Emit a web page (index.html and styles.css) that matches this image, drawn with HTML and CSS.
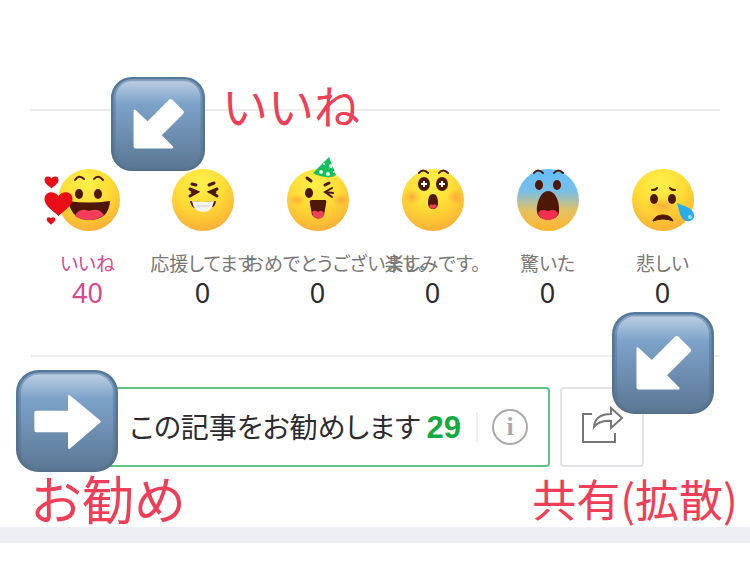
FILE: index.html
```html
<!DOCTYPE html>
<html lang="ja">
<head>
    <meta charset="UTF-8">
    <meta name="viewport" content="width=device-width, initial-scale=1.0">
    <title>いいね・お勧め・共有</title>
    <link rel="stylesheet" href="styles.css">
</head>
<body>

    <svg class="defs" aria-hidden="true">
        <defs>
            <radialGradient id="face" cx="45%" cy="22%" r="80%">
                <stop offset="0" stop-color="#fff04a"/>
                <stop offset="0.5" stop-color="#fddc35"/>
                <stop offset="1" stop-color="#fbae36"/>
            </radialGradient>
            <linearGradient id="shock" x1="0" y1="0" x2="0" y2="1">
                <stop offset="0" stop-color="#62bdfb"/>
                <stop offset="0.36" stop-color="#78bfe6"/>
                <stop offset="0.68" stop-color="#e6c15e"/>
                <stop offset="1" stop-color="#fdb52e"/>
            </linearGradient>
            <radialGradient id="blush">
                <stop offset="0" stop-color="#f9913c" stop-opacity="0.65"/>
                <stop offset="1" stop-color="#f9a13c" stop-opacity="0"/>
            </radialGradient>
            <linearGradient id="tile" x1="0" y1="0" x2="0" y2="1">
                <stop offset="0" stop-color="#b9cde2"/>
                <stop offset="0.26" stop-color="#7da2c8"/>
                <stop offset="0.55" stop-color="#7192b6"/>
                <stop offset="1" stop-color="#5b7894"/>
            </linearGradient>
            <linearGradient id="rim" x1="0" y1="0" x2="0" y2="1">
                <stop offset="0" stop-color="#55799c"/>
                <stop offset="1" stop-color="#566f89"/>
            </linearGradient>
            <symbol id="heart" viewBox="0 0 30 26">
                <path d="M15 25C10 20 1 15 1 8C1 0 11-1 15 5C19-1 29 0 29 8C29 15 20 20 15 25Z" fill="#e90d17"/>
            </symbol>
            <symbol id="tile-box" viewBox="0 0 100 100">
                <rect width="100" height="100" rx="22" fill="url(#rim)"/>
                <rect x="2.5" y="2.5" width="95" height="96" rx="20" fill="url(#tile)" opacity="0.5"/>
                <rect x="5" y="4.5" width="90" height="92" rx="17" fill="url(#tile)"/>
            </symbol>
        </defs>
    </svg>

    <main class="article-footer">
        <ul class="reactions">
            <li>
                <button class="reaction active">
                    <svg class="emoji" viewBox="0 0 90 80" aria-hidden="true">
                        <circle cx="46" cy="40" r="31" fill="url(#face)"/>
                        <path d="M32 20Q36 14 41 19M51 19Q55 14 60 20" fill="none" stroke="#4e1708" stroke-width="2" stroke-linecap="round"/>
                        <ellipse cx="36" cy="34" rx="4" ry="5" fill="#4e1708"/>
                        <ellipse cx="55" cy="34" rx="4" ry="5" fill="#4e1708"/>
                        <path d="M25 41Q46 44 67 41Q66 60 46 60Q29 60 25 41Z" fill="#4e1708"/>
                        <path d="M32 56Q36 47 46 51Q56 47 61 55Q55 60 46 60Q37 60 32 56Z" fill="#f43d5c"/>
                        <use href="#heart" x="0" y="31" width="31" height="26"/>
                        <use href="#heart" x="1" y="16" width="15" height="13"/>
                        <use href="#heart" x="3" y="57" width="10" height="8"/>
                    </svg>
                    <span class="label">いいね</span>
                    <span class="count">40</span>
                </button>
            </li>
            <li>
                <button class="reaction">
                    <svg class="emoji" viewBox="0 0 90 80" aria-hidden="true">
                        <circle cx="45" cy="40" r="31" fill="url(#face)"/>
                        <path d="M34 24L38 25M51 25L56 23M32 29L39 32L32 36M34 32H38M59 29L52 32L59 36M57 32H53" fill="none" stroke="#4e1708" stroke-width="3" stroke-linecap="round"/>
                        <path d="M32 41Q44 43 58 41Q57 48 53 47L36 48Q33 46 32 41Z" fill="#4e1708"/>
                        <path d="M34 41Q45 43 56 41Q54 52 46 52Q36 53 34 41Z" fill="#f5f4f2"/>
                        <path d="M38 46H51" stroke="#c9c7c8"/>
                    </svg>
                    <span class="label">応援してます</span>
                    <span class="count">0</span>
                </button>
            </li>
            <li>
                <button class="reaction">
                    <svg class="emoji" viewBox="0 0 90 80" aria-hidden="true">
                        <circle cx="45" cy="40" r="31" fill="url(#face)"/>
                        <ellipse cx="24" cy="40" rx="9" ry="6" fill="url(#blush)"/>
                        <ellipse cx="68" cy="40" rx="9" ry="6" fill="url(#blush)"/>
                        <path d="M34 18L38 21M52 25L56 23" stroke="#4e1708" stroke-width="3" stroke-linecap="round"/>
                        <ellipse cx="36" cy="33" rx="4" ry="5" fill="#4e1708"/>
                        <path d="M59 28L52 32L59 37M53 32L60 33" fill="none" stroke="#4e1708" stroke-width="2" stroke-linecap="round"/>
                        <path d="M38 40H52Q54 40 53 44L51 55Q45 62 39 55L37 44Q36 41 38 40Z" fill="#4e1708"/>
                        <path d="M39 52Q42 49 45 52Q49 49 51 53L50 57Q45 61 40 56Z" fill="#ee4058"/>
                        <path d="M56 -3L63 15Q59 18 53 17Q45 16 40 13Z" fill="#14bf5c"/>
                        <g fill="#e5f7eb"><circle cx="48" cy="12" r="2"/><circle cx="58" cy="6" r="2"/><circle cx="55" cy="14" r="2"/><circle cx="51" cy="4" r="1"/><circle cx="61" cy="12" r="1"/></g>
                    </svg>
                    <span class="label">おめでとうございます。</span>
                    <span class="count">0</span>
                </button>
            </li>
            <li>
                <button class="reaction">
                    <svg class="emoji" viewBox="0 0 90 80" aria-hidden="true">
                        <circle cx="45" cy="40" r="31" fill="url(#face)"/>
                        <ellipse cx="24" cy="37" rx="9" ry="8" fill="url(#blush)"/>
                        <ellipse cx="68" cy="37" rx="9" ry="8" fill="url(#blush)"/>
                        <path d="M31 13Q35 8 40 13M51 13Q55 8 60 13" fill="none" stroke="#4e1708" stroke-width="2" stroke-linecap="round"/>
                        <ellipse cx="36" cy="24" rx="6" ry="7" fill="#4e1708"/>
                        <ellipse cx="54" cy="24" rx="6" ry="7" fill="#4e1708"/>
                        <path d="M36 21V27M33 24H39M54 21V27M51 24H57" stroke="#fff" stroke-width="2"/>
                        <path d="M45 34C49 34 50 39 50 43C50 51 40 51 40 43C40 39 41 34 45 34Z" fill="#4e1708"/>
                        <path d="M41 46Q43 43 45 45Q47 43 49 46Q45 52 41 46Z" fill="#ee3d54"/>
                    </svg>
                    <span class="label">楽しみです。</span>
                    <span class="count">0</span>
                </button>
            </li>
            <li>
                <button class="reaction">
                    <svg class="emoji" viewBox="0 0 90 80" aria-hidden="true">
                        <circle cx="45" cy="40" r="31" fill="url(#shock)"/>
                        <path d="M31 13Q35 8 40 13M51 13Q55 8 60 13" fill="none" stroke="#4e1708" stroke-width="2" stroke-linecap="round"/>
                        <ellipse cx="36" cy="25" rx="4" ry="5" fill="#4e1708"/>
                        <ellipse cx="54" cy="25" rx="4" ry="5" fill="#4e1708"/>
                        <path d="M45 31C53 31 57 43 56 52C55 62 35 62 34 52C33 43 38 31 45 31Z" fill="#4e1708"/>
                        <path d="M35 53Q38 48 45 51Q52 48 55 53Q53 60 45 60Q37 60 35 53Z" fill="#f42e51"/>
                    </svg>
                    <span class="label">驚いた</span>
                    <span class="count">0</span>
                </button>
            </li>
            <li>
                <button class="reaction">
                    <svg class="emoji" viewBox="0 0 90 80" aria-hidden="true">
                        <circle cx="45" cy="40" r="31" fill="url(#face)"/>
                        <ellipse cx="44" cy="46" rx="16" ry="9" fill="url(#blush)"/>
                        <path d="M34 30Q38 30 39 28M52 28Q53 30 57 30" fill="none" stroke="#4e1708" stroke-width="2" stroke-linecap="round"/>
                        <ellipse cx="36" cy="39" rx="4" ry="5" fill="#4e1708"/>
                        <ellipse cx="54" cy="39" rx="4" ry="5" fill="#4e1708"/>
                        <path d="M35 61Q37 55 45 55Q53 55 55 61Q45 57 35 61Z" fill="#4e1708" stroke="#4e1708"/>
                        <path d="M59 43L69 47C76 50 78 57 74 60C69 63 64 60 62 54Z" fill="#27adea"/>
                        <circle cx="72" cy="57" r="2" fill="#9ee0fb"/>
                    </svg>
                    <span class="label">悲しい</span>
                    <span class="count">0</span>
                </button>
            </li>
        </ul>

        <div class="actions">
            <div class="recommend">
                <button class="recommend-button">この記事をお勧めします <strong>29</strong></button>
                <button class="info" aria-label="情報">i</button>
            </div>
            <button class="share" aria-label="共有">
                <svg viewBox="0 0 42 38" aria-hidden="true">
                    <path d="M11 8H2V36H34V27" fill="none" stroke="#777" stroke-width="2"/>
                    <path d="M13 21Q14 8 30 8V2L41 12L30 22V15Q18 14 13 21Z" fill="#fff" stroke="#777" stroke-width="2"/>
                </svg>
            </button>
        </div>

        <svg class="tile tile-like" viewBox="0 0 100 100" aria-hidden="true">
            <use href="#tile-box"/>
            <path d="M24 36Q24 34 26 35L39 47L62 24Q63 23 65 24L77 36Q78 37 77 39L54 62L66 74Q67 76 65 76H26Q24 76 24 74Z" fill="#fff"/>
        </svg>
        <p class="note note-like">いいね</p>

        <svg class="tile tile-recommend" viewBox="0 0 100 100" aria-hidden="true">
            <use href="#tile-box"/>
            <path d="M20 40H51V26Q51 23 53 25L82 49Q84 51 82 52L53 77Q51 78 51 76V61H20Q18 61 18 59V42Q18 40 20 40Z" fill="#fff"/>
        </svg>
        <p class="note note-recommend">お勧め</p>

        <svg class="tile tile-share" viewBox="0 0 100 100" aria-hidden="true">
            <use href="#tile-box"/>
            <path d="M24 36Q24 34 26 35L39 47L62 24Q63 23 65 24L77 36Q78 37 77 39L54 62L66 74Q67 76 65 76H26Q24 76 24 74Z" fill="#fff"/>
        </svg>
        <p class="note note-share">共有(拡散)</p>
    </main>

    <div class="divider"></div>

</body>
</html>
```

FILE: styles.css
```css
* {
    box-sizing: border-box;
}

body {
    margin: 0;
    background-color: #fff;
    color: #2b2b30;
    font-family: "Noto Sans CJK JP", sans-serif;
}

button {
    margin: 0;
    padding: 0;
    border: none;
    background: none;
    color: inherit;
    font-family: inherit;
    cursor: pointer;
}

.defs {
    position: absolute;
    width: 0;
    height: 0;
}

.article-footer {
    position: relative;
    padding: 109px 30px 60px;
}

.reactions {
    display: grid;
    grid-template-columns: repeat(6, minmax(0, 1fr));
    margin: 0;
    padding: 49px 0 46px;
    border-top: 2px solid #ededed;
    border-bottom: 2px solid #ededed;
    list-style: none;
}

.reaction {
    display: flex;
    flex-direction: column;
    align-items: center;
    width: 100%;
}

.emoji {
    width: 90px;
    height: 80px;
    overflow: visible;
}

/* long labels run over to the right */
.label {
    flex-shrink: 0;
    width: 144px;
    margin-top: 8px;
    color: #777;
    font-size: 19px;
    font-feature-settings: "palt";
    line-height: 29px;
    text-align: center;
    white-space: nowrap;
}

.count {
    font-family: "Noto Sans", sans-serif;
    font-size: 27px;
    line-height: 32px;
}

.active .label,
.active .count {
    color: #d9478f;
}

.actions {
    display: flex;
    gap: 10px;
    margin-top: 30px;
    padding-right: 76px;
}

.recommend {
    display: flex;
    flex: 1;
    align-items: center;
    justify-content: flex-end;
    height: 80px;
    padding-right: 20px;
    border: 2px solid #5fc384;
    border-radius: 4px;
}

.recommend-button {
    padding-right: 15px;
    border-right: 2px solid #eee;
    font-size: 28px;
    font-feature-settings: "palt";
    line-height: 28px;
}

.recommend-button strong {
    color: #12ab40;
    font-family: "Liberation Sans", sans-serif;
    font-size: 31px;
}

.info {
    width: 36px;
    height: 36px;
    margin-left: 14px;
    border: 2px solid #aaa;
    border-radius: 50%;
    color: #aaa;
    font-family: "Liberation Serif", serif;
    font-size: 26px;
    font-weight: bold;
    line-height: 30px;
}

.share {
    width: 84px;
    height: 80px;
    border: 2px solid #e4e4e8;
    border-radius: 4px;
}

.share svg {
    width: 42px;
    height: 38px;
}

.note {
    position: absolute;
    margin: 0;
    color: #ee3e58;
    line-height: 60px;
    white-space: nowrap;
}

.note-like {
    top: 74px;
    left: 222px;
    font-size: 46px;
}

.note-recommend {
    top: 468px;
    left: 30px;
    font-size: 52px;
}

.note-share {
    top: 468px;
    right: 12px;
    font-size: 44px;
}

.tile {
    position: absolute;
    width: 102px;
    height: 102px;
}

.tile-like {
    top: 77px;
    left: 111px;
    width: 94px;
    height: 94px;
}

.tile-recommend {
    top: 370px;
    left: 16px;
}

.tile-share {
    top: 312px;
    right: 36px;
}

.divider {
    height: 16px;
    background-color: #eeeff5;
}
```
